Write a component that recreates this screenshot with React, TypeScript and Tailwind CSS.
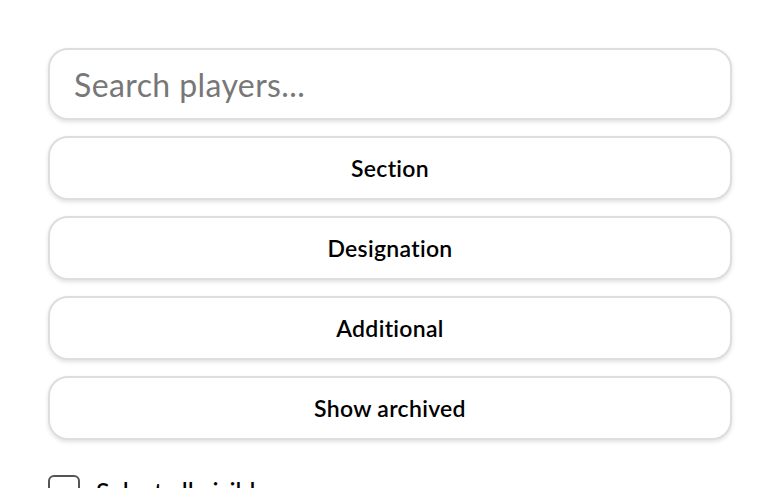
const filters = ["Section", "Designation", "Additional", "Show archived"];

export default function App() {
  return (
    <div className="min-h-screen bg-white px-12 pt-12 font-['Lato',_'Liberation_Sans',_sans-serif] text-black">
      <div className="flex flex-col gap-4">
        <input
          placeholder="Search players..."
          className="h-[72px] w-full rounded-[20px] border-2 border-[#dedede] bg-white px-6 text-[32px] tracking-[0.4px] text-black shadow-[0_2px_4px_rgba(0,0,0,0.12)] outline-none placeholder:text-[#777]"
        />
        {filters.map((f) => (
          <button
            key={f}
            className="h-16 w-full rounded-[20px] border-2 border-[#dedede] bg-white text-[23px] font-semibold tracking-[0.3px] shadow-[0_2px_4px_rgba(0,0,0,0.12)]"
          >
            {f}
          </button>
        ))}
      </div>
      <label className="mt-[35px] flex items-center gap-4">
        <span className="h-8 w-8 shrink-0 rounded-md border-2 border-[#555]" />
        <span className="text-[25px] font-medium leading-8">Select all visible</span>
      </label>
    </div>
  );
}
